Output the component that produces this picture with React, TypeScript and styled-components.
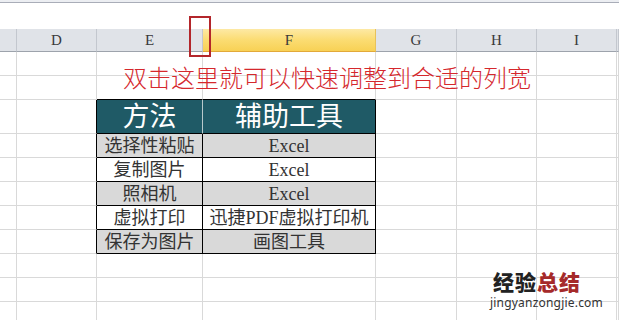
import React from 'react';
import styled, {createGlobalStyle} from 'styled-components';

const COLUMNS = [
  {name: '', width: '17px'},
  {name: 'D', width: '80px'},
  {name: 'E', width: '106px'},
  {name: 'F', width: '173px', selected: true},
  {name: 'G', width: '81px'},
  {name: 'H', width: '80px'},
  {name: 'I', width: '80px'},
  {name: '', width: '1fr'},
];

const ROW_HEIGHTS = [24, 24, 34, 24, 24, 24, 24, 24, 24, 24, 24];

const TABLE_TOP = 2;
const TABLE_COLS = [2, 3];

const TABLE = [
  ['方法', '辅助工具'],
  ['选择性粘贴', 'Excel'],
  ['复制图片', 'Excel'],
  ['照相机', 'Excel'],
  ['虚拟打印', '迅捷PDF虚拟打印机'],
  ['保存为图片', '画图工具'],
];

const GRID = '#d9d9d9';
const INK = '#000';

type Kind = 'plain' | 'head' | 'data';

function describeCell(r: number, c: number) {
  const tr = r - TABLE_TOP;
  const inRows = tr >= 0 && tr < TABLE.length;
  const inTable = inRows && TABLE_COLS.includes(c);
  let right = GRID;
  let bottom = GRID;
  let bg = '#fff';
  let kind: Kind = 'plain';
  let text = '';

  if (inTable) {
    const ti = TABLE_COLS.indexOf(c);
    text = TABLE[tr][ti];
    right = tr === 0 && ti === 0 ? '#b9c9cc' : INK;
    bottom = INK;
    kind = tr === 0 ? 'head' : 'data';
    bg = tr === 0 ? '#1f5a66' : tr % 2 === 1 ? '#d9d9d9' : '#fff';
  } else if (inRows && c === TABLE_COLS[0] - 1) {
    right = INK;
  }
  if (r === TABLE_TOP - 1 && TABLE_COLS.includes(c)) bottom = INK;

  return {right, bottom, bg, kind, text};
}

function App() {
  return (
    <>
      <GlobalStyle />
      <Page>
        <FormulaEdge />
        <Sheet>
          {COLUMNS.map((col, i) => (
            <ColHead key={`h${i}`} $selected={!!col.selected}>
              {col.name}
            </ColHead>
          ))}
          {ROW_HEIGHTS.map((_, r) =>
            COLUMNS.map((_, c) => {
              const cell = describeCell(r, c);
              return (
                <Cell
                  key={`${r}-${c}`}
                  $right={cell.right}
                  $bottom={cell.bottom}
                  $bg={cell.bg}
                  $kind={cell.kind}
                >
                  {cell.text}
                </Cell>
              );
            })
          )}
        </Sheet>

        <Marker />
        <Note>双击这里就可以快速调整到合适的列宽</Note>

        <Watermark>
          <Brand>
            经验<BrandRed>总结</BrandRed>
          </Brand>
          <Site>jingyanzongjie.com</Site>
        </Watermark>
      </Page>
    </>
  );
}

const GlobalStyle = createGlobalStyle`
  html, body {
    margin: 0;
    padding: 0;
    background: #fff;
  }
  body {
    font-family: "Noto Sans CJK SC", sans-serif;
  }
`;

const Page = styled.div`
  position: relative;
  width: 619px;
  height: 320px;
  overflow: hidden;
  background: #fff;
`;

const FormulaEdge = styled.div`
  height: 29px;
  box-sizing: border-box;
  border-top: 2px solid #eceef2;
  background: linear-gradient(#a9adb8, #a9adb8) 0 0 / 100% 1px no-repeat, #fff;
`;

const Sheet = styled.div`
  display: grid;
  grid-template-columns: ${COLUMNS.map((c) => c.width).join(' ')};
  grid-template-rows: 23px ${ROW_HEIGHTS.map((h) => `${h}px`).join(' ')};
`;

const ColHead = styled.div<{$selected: boolean}>`
  box-sizing: border-box;
  display: flex;
  align-items: center;
  justify-content: center;
  font-family: "Liberation Serif", serif;
  font-size: 15px;
  color: #3a3a3a;
  border-right: 1px solid ${(p) => (p.$selected ? '#e8c25a' : '#c3c7ce')};
  border-bottom: 1px solid ${(p) => (p.$selected ? '#e2a93a' : '#9da3ac')};
  background: ${(p) =>
    p.$selected ? 'linear-gradient(#fde9a4, #fbdc72 50%, #f8d155)' : '#e0e3e8'};
`;

const Cell = styled.div<{$right: string; $bottom: string; $bg: string; $kind: Kind}>`
  box-sizing: border-box;
  display: flex;
  align-items: center;
  justify-content: center;
  white-space: nowrap;
  overflow: hidden;
  background: ${(p) => p.$bg};
  border-right: 1px solid ${(p) => p.$right};
  border-bottom: 1px solid ${(p) => p.$bottom};
  font-family: "Liberation Serif", "Noto Sans CJK SC", serif;
  font-weight: 400;
  line-height: 1;
  padding-top: 1px;
  color: ${(p) => (p.$kind === 'head' ? '#fff' : '#333')};
  font-size: ${(p) => (p.$kind === 'head' ? '27px' : '18px')};
`;

const Marker = styled.div`
  position: absolute;
  left: 189px;
  top: 16px;
  width: 22px;
  height: 41px;
  box-sizing: border-box;
  border: 2px solid #b3262b;
`;

const Note = styled.div`
  position: absolute;
  left: 123px;
  top: 65px;
  font-family: "Noto Sans CJK SC", sans-serif;
  font-weight: 300;
  font-size: 24px;
  line-height: 24px;
  color: #d5282d;
  white-space: nowrap;
`;

const Watermark = styled.div`
  position: absolute;
  left: 490px;
  top: 271px;
  display: flex;
  flex-direction: column;
  align-items: flex-start;
  gap: 5px;
`;

const Brand = styled.div`
  font-family: "Noto Sans CJK SC", sans-serif;
  font-weight: 900;
  font-size: 21px;
  line-height: 21px;
  color: #222;
  padding-left: 3px;
  letter-spacing: 1px;
`;

const BrandRed = styled.span`
  color: #a52a2a;
`;

const Site = styled.div`
  font-family: "Noto Sans", sans-serif;
  font-size: 12px;
  line-height: 12px;
  color: #333;
  letter-spacing: 0.2px;
`;

export default App;
